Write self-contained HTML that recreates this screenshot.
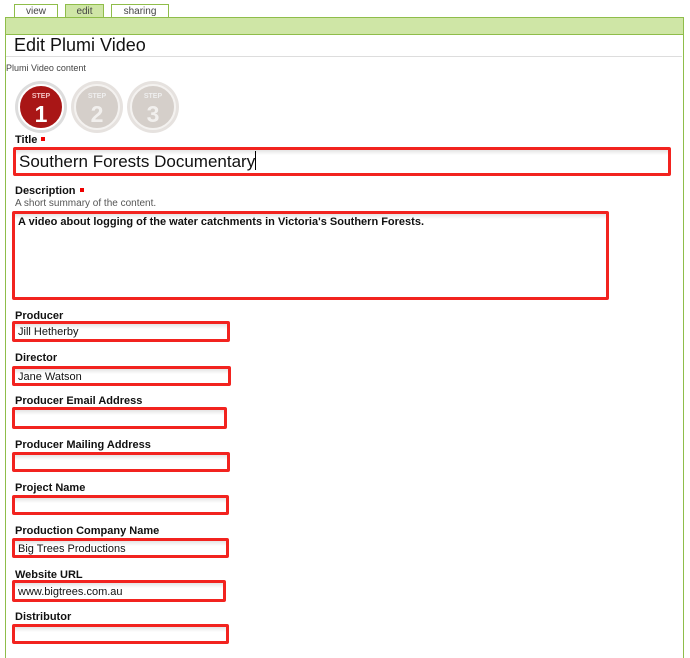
<!DOCTYPE html>
<html><head><meta charset="utf-8"><style>
body{margin:0;width:690px;height:650px;background:#fff;font-family:"Liberation Sans",sans-serif;position:relative;overflow:hidden}
.a{position:absolute}
.tab{position:absolute;top:4px;height:13px;border:1px solid #8fbd4a;border-bottom:none;font-size:10px;color:#444;text-align:center;line-height:13px;background:#fff}
.lbl{position:absolute;left:15px;font-size:11px;font-weight:bold;color:#111}
.box{position:absolute;border:3px solid #f2231f;border-radius:2px;box-sizing:border-box;background:linear-gradient(#e4e4e4,#fff 5px);font-size:11px;color:#111;padding-left:3px;padding-top:1px;line-height:14px}
.req{display:inline-block;width:4px;height:4px;background:#e00;margin-left:4px;vertical-align:2px}
</style></head><body>
<div class="tab" style="left:14px;width:42px">view</div>
<div class="tab" style="left:65px;width:37px;background:#cfe6a6">edit</div>
<div class="tab" style="left:111px;width:56px">sharing</div>
<div class="a" style="left:5px;top:17px;width:677px;height:640px;border:1px solid #8fbd4a;border-bottom:none"></div>
<div class="a" style="left:6px;top:18px;width:677px;height:16px;background:#cfe6a6;border-bottom:1px solid #8fbd4a"></div>
<div class="a" style="left:14px;top:35px;font-size:18px;color:#111">Edit Plumi Video</div>
<div class="a" style="left:6px;top:56px;width:676px;height:1px;background:#ddd"></div>
<div class="a" style="left:6px;top:63px;font-size:9px;color:#444">Plumi Video content</div>
<svg class="a" style="left:12px;top:80px" width="172" height="56">
<circle cx="29" cy="27" r="26" fill="#ddd"/><circle cx="29" cy="27" r="22" fill="#a91616" stroke="#fff" stroke-width="2"/>
<text x="29" y="18" font-size="7" font-weight="bold" fill="#f2c0c0" text-anchor="middle" font-family="Liberation Sans">STEP</text>
<text x="29" y="42" font-size="23" font-weight="bold" fill="#fff" text-anchor="middle" font-family="Liberation Sans">1</text>
<circle cx="85" cy="27" r="26" fill="#e6e2df"/><circle cx="85" cy="27" r="22" fill="#d5cfca" stroke="#f4f2f0" stroke-width="2"/>
<text x="85" y="18" font-size="7" font-weight="bold" fill="#eee" text-anchor="middle" font-family="Liberation Sans">STEP</text>
<text x="85" y="42" font-size="23" font-weight="bold" fill="#f2f0ee" text-anchor="middle" font-family="Liberation Sans">2</text>
<circle cx="141" cy="27" r="26" fill="#e6e2df"/><circle cx="141" cy="27" r="22" fill="#d5cfca" stroke="#f4f2f0" stroke-width="2"/>
<text x="141" y="18" font-size="7" font-weight="bold" fill="#eee" text-anchor="middle" font-family="Liberation Sans">STEP</text>
<text x="141" y="42" font-size="23" font-weight="bold" fill="#f2f0ee" text-anchor="middle" font-family="Liberation Sans">3</text>
</svg>
<div class="lbl" style="top:134px">Title<span class="req"></span></div>
<div class="box" style="left:13px;top:147px;width:658px;height:29px;font-size:17px;line-height:22px">Southern Forests Documentary<span style="display:inline-block;width:1px;height:19px;background:#000;vertical-align:-3px"></span></div>
<div class="lbl" style="top:185px">Description<span class="req"></span></div>
<div class="a" style="left:15px;top:198px;font-size:10px;color:#555">A short summary of the content.</div>
<div class="box" style="left:12px;top:211px;width:597px;height:89px;font-weight:bold;font-size:11px;line-height:14px">A video about logging of the water catchments in Victoria's Southern Forests.</div>
<div class="lbl" style="top:310px">Producer</div>
<div class="box" style="left:12px;top:321px;width:218px;height:21px">Jill Hetherby</div>
<div class="lbl" style="top:352px">Director</div>
<div class="box" style="left:12px;top:366px;width:219px;height:20px">Jane Watson</div>
<div class="lbl" style="top:395px">Producer Email Address</div>
<div class="box" style="left:12px;top:407px;width:215px;height:22px"></div>
<div class="lbl" style="top:439px">Producer Mailing Address</div>
<div class="box" style="left:12px;top:452px;width:218px;height:20px"></div>
<div class="lbl" style="top:482px">Project Name</div>
<div class="box" style="left:12px;top:495px;width:217px;height:20px"></div>
<div class="lbl" style="top:525px">Production Company Name</div>
<div class="box" style="left:12px;top:538px;width:217px;height:20px">Big Trees Productions</div>
<div class="lbl" style="top:569px">Website URL</div>
<div class="box" style="left:12px;top:580px;width:214px;height:22px;padding-top:2px">www.bigtrees.com.au</div>
<div class="lbl" style="top:611px">Distributor</div>
<div class="box" style="left:12px;top:624px;width:217px;height:20px"></div>
</body></html>
